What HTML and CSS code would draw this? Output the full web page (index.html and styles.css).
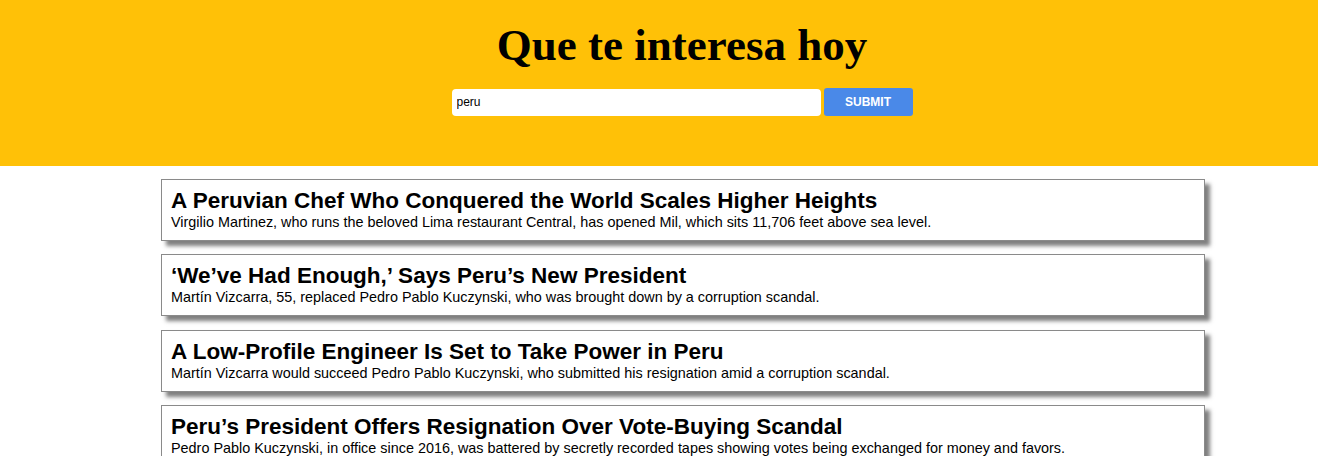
FILE: index.html
```html
<!DOCTYPE html>
<html>
<head>
<meta charset="utf-8">
<link rel="stylesheet" href="styles.css">
</head>
<body>
<header class="hero">
  <h1 class="hero-title">Que te interesa hoy</h1>
  <form class="search">
    <input class="search-input" type="text" value="peru">
    <button class="search-btn" type="button">SUBMIT</button>
  </form>
</header>
<main class="list">
  <article class="card">
    <h2 class="card-title">A Peruvian Chef Who Conquered the World Scales Higher Heights</h2>
    <p class="card-text">Virgilio Martinez, who runs the beloved Lima restaurant Central, has opened Mil, which sits 11,706 feet above sea level.</p>
  </article>
  <article class="card">
    <h2 class="card-title">‘We’ve Had Enough,’ Says Peru’s New President</h2>
    <p class="card-text">Martín Vizcarra, 55, replaced Pedro Pablo Kuczynski, who was brought down by a corruption scandal.</p>
  </article>
  <article class="card">
    <h2 class="card-title">A Low-Profile Engineer Is Set to Take Power in Peru</h2>
    <p class="card-text">Martín Vizcarra would succeed Pedro Pablo Kuczynski, who submitted his resignation amid a corruption scandal.</p>
  </article>
  <article class="card">
    <h2 class="card-title">Peru’s President Offers Resignation Over Vote-Buying Scandal</h2>
    <p class="card-text">Pedro Pablo Kuczynski, in office since 2016, was battered by secretly recorded tapes showing votes being exchanged for money and favors.</p>
  </article>
</main>
</body>
</html>
```

FILE: styles.css
```css
html, body {
  margin: 0;
  padding: 0;
  background: #ffffff;
}
body {
  font-family: "Liberation Sans", Arial, sans-serif;
  color: #000;
}
.hero {
  background: #ffc107;
  height: 166px;
  box-sizing: border-box;
  padding: 17px 0 0 46px;
  display: flex;
  flex-direction: column;
  align-items: center;
}
.hero-title {
  margin: 0;
  font-family: "Liberation Serif", "Times New Roman", serif;
  font-weight: bold;
  font-size: 45px;
  line-height: 57px;
}
.search {
  margin: 14px 0 0 0;
  display: flex;
  align-items: center;
  gap: 3px;
}
.search-input {
  width: 369px;
  height: 27px;
  box-sizing: border-box;
  border: none;
  border-radius: 4px;
  background: #fff;
  padding: 0 5px;
  font-family: "Liberation Sans", Arial, sans-serif;
  font-size: 12px;
  color: #000;
  outline: none;
}
.search-btn {
  width: 89px;
  height: 28px;
  border: none;
  border-radius: 3px;
  background: #4a89e8;
  color: #fff;
  font-family: "Liberation Sans", Arial, sans-serif;
  font-size: 12px;
  font-weight: bold;
  padding: 0;
}
.list {
  display: flex;
  flex-direction: column;
  gap: 13.33px;
  padding: 13px 113px 0 161px;
}
.card {
  border: 1px solid #8a8a8a;
  box-shadow: 5px 5px 4px #7f7f7f;
  padding: 8px 9px 10px 9px;
  background: #fff;
}
.card-title {
  margin: 0;
  font-size: 22.5px;
  line-height: 26px;
  font-weight: bold;
}
.card-text {
  margin: 0;
  font-size: 14.4px;
  line-height: 16px;
}
```
